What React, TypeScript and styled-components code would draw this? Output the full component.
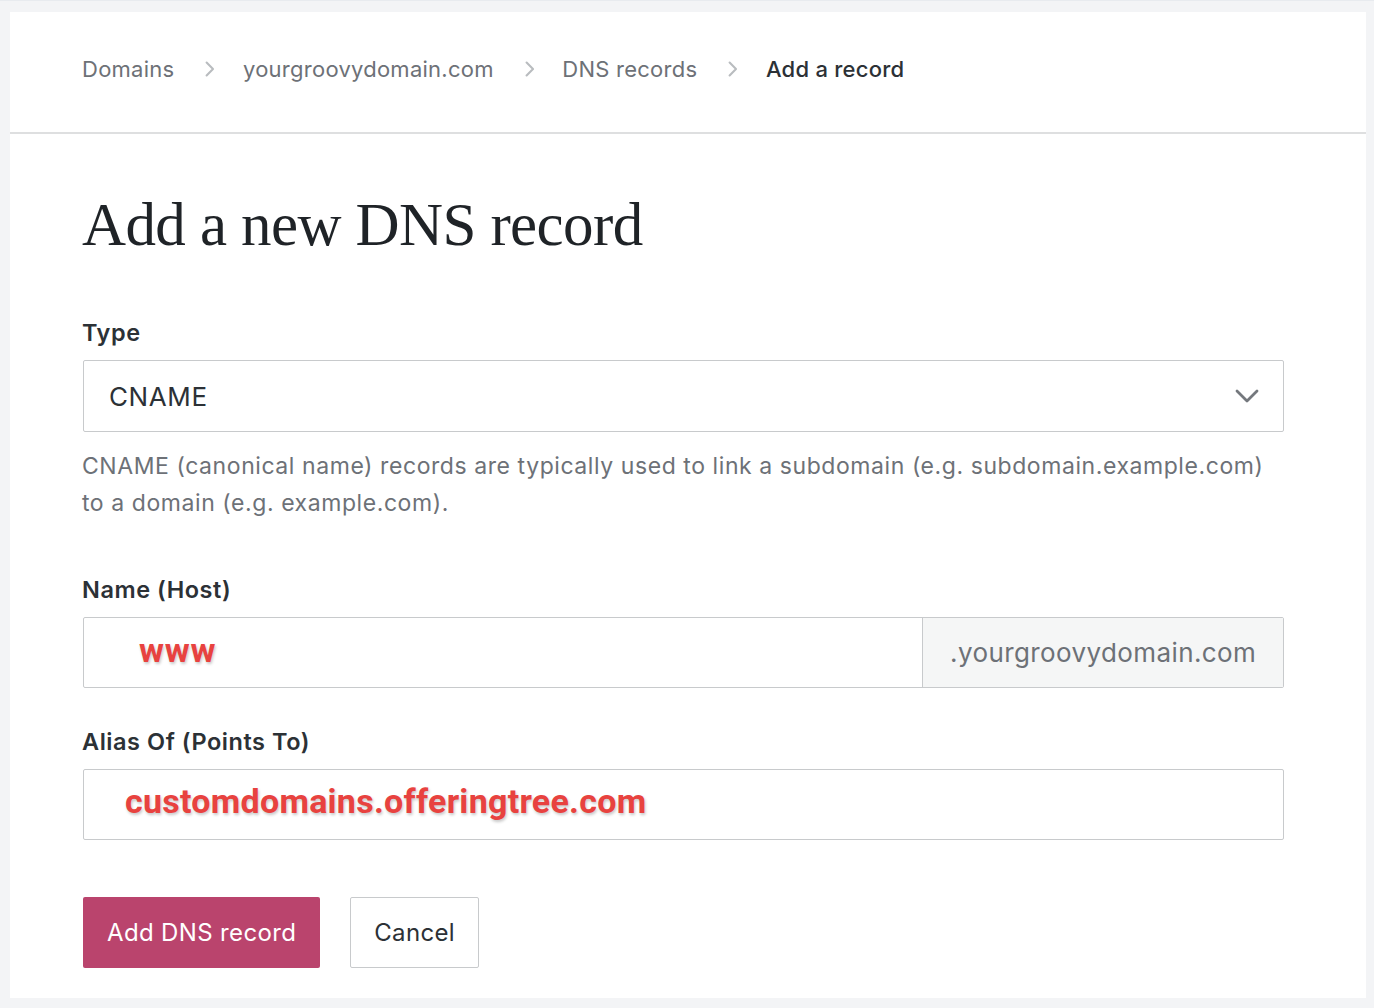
import React from "react";
import styled, { createGlobalStyle } from "styled-components";

const Global = createGlobalStyle`
  html, body { margin: 0; padding: 0; }
  body {
    background: #f3f4f6;
    font-family: Inter, "Noto Sans", "Liberation Sans", sans-serif;
    -webkit-font-smoothing: antialiased;
  }
  * { box-sizing: border-box; }
`;

const Page = styled.div`
  width: 1374px;
  height: 1008px;
  padding: 11px 8px 11px 10px;
  background: #f3f4f6;
  border-top: 1px solid #e8ebef;
`;

const Card = styled.div`
  background: #fff;
  height: 986px;
  display: flex;
  flex-direction: column;
`;

const Crumbs = styled.nav`
  height: 122px;
  border-bottom: 2px solid #dedfe0;
  display: flex;
  align-items: center;
  padding: 0 0 6px 72px;
`;

const Crumb = styled.span<{ $current?: boolean }>`
  font-size: 22px;
  color: ${(p) => (p.$current ? "#2c3136" : "#6d7177")};
  font-weight: ${(p) => (p.$current ? 500 : 400)};
  letter-spacing: 0.25px;
`;

const Sep = styled.span`
  display: inline-flex;
  margin: 0 28px 0 31px;
  color: #b9bcbf;
`;

const Body = styled.div`
  padding: 55px 82px 0 72px;
  display: flex;
  flex-direction: column;
`;

const Title = styled.h1`
  margin: 0;
  font-family: "Liberation Serif", "DejaVu Serif", serif;
  font-weight: 400;
  font-size: 61px;
  letter-spacing: -0.6px;
  color: #1f2327;
  line-height: 72px;
`;

const Field = styled.div<{ $top: number }>`
  margin-top: ${(p) => p.$top}px;
  display: flex;
  flex-direction: column;
`;

const Label = styled.label`
  font-size: 23.5px;
  font-weight: 600;
  color: #2c3136;
  line-height: 30px;
  margin-bottom: 12px;
  letter-spacing: 0.55px;
`;

const SelectBox = styled.div`
  height: 72px;
  border: 1.5px solid #c8cacc;
  border-radius: 2px;
  display: flex;
  align-items: center;
  justify-content: space-between;
  padding: 0 24px 0 25px;
  font-size: 26px;
  letter-spacing: 0.6px;
  color: #2c3136;
  margin-left: 1px;
`;

const Help = styled.p`
  margin: 16px 0 0;
  font-size: 23px;
  line-height: 37px;
  color: #6d7177;
  letter-spacing: 0.57px;
  white-space: nowrap;
`;

const Group = styled.div`
  height: 71px;
  border: 1.5px solid #c8cacc;
  border-radius: 2px;
  display: flex;
  margin-left: 1px;
`;

const InputArea = styled.div<{ $pad: number }>`
  flex: 1;
  display: flex;
  align-items: center;
  padding-left: ${(p) => p.$pad}px;
`;

const Addon = styled.div`
  width: 361px;
  background: #f5f6f6;
  border-left: 1.5px solid #c8cacc;
  display: flex;
  align-items: center;
  padding-left: 27px;
  font-size: 26px;
  color: #6d7177;
  letter-spacing: 0.4px;
`;

const Annot = styled.span<{ $size: number; $shift: number; $track: number }>`
  font-family: Roboto, "Liberation Sans", sans-serif;
  font-weight: 700;
  font-size: ${(p) => p.$size}px;
  color: #e8423f;
  text-shadow: 1px 2px 3px rgba(0, 0, 0, 0.22);
  position: relative;
  top: ${(p) => p.$shift}px;
  letter-spacing: ${(p) => p.$track}px;
`;

const Actions = styled.div`
  display: flex;
  gap: 30px;
  margin-top: 57px;
  margin-left: 1px;
`;

const Button = styled.button<{ $primary?: boolean }>`
  height: 71px;
  padding: 0 ${(p) => (p.$primary ? 24 : 23)}px;
  border-radius: 2px;
  font-family: Inter, "Noto Sans", "Liberation Sans", sans-serif;
  font-size: 24px;
  letter-spacing: 0.35px;
  cursor: pointer;
  background: ${(p) => (p.$primary ? "#ba446d" : "#fff")};
  color: ${(p) => (p.$primary ? "#fff" : "#2c3136")};
  border: ${(p) => (p.$primary ? "none" : "1.5px solid #c8cacc")};
`;

const Chevron = ({ size = 14, color = "#b9bcbf", w = 1.6 }: { size?: number; color?: string; w?: number }) => (
  <svg width={size * 0.6} height={size} viewBox="0 0 6 10" fill="none">
    <path d="M1 1l4 4-4 4" stroke={color} strokeWidth={w} strokeLinecap="round" strokeLinejoin="round" />
  </svg>
);

const Down = () => (
  <svg width="24" height="14" viewBox="0 0 24 14" fill="none">
    <path d="M2 2l10 10L22 2" stroke="#74787d" strokeWidth="2.8" strokeLinecap="round" strokeLinejoin="round" />
  </svg>
);

export default function App() {
  return (
    <>
      <Global />
      <Page>
        <Card>
          <Crumbs>
            <Crumb>Domains</Crumb>
            <Sep><Chevron size={16} w={1.3} /></Sep>
            <Crumb>yourgroovydomain.com</Crumb>
            <Sep><Chevron size={16} w={1.3} /></Sep>
            <Crumb>DNS records</Crumb>
            <Sep><Chevron size={16} w={1.3} /></Sep>
            <Crumb $current>Add a record</Crumb>
          </Crumbs>
          <Body>
            <Title>Add a new DNS record</Title>
            <Field $top={57}>
              <Label>Type</Label>
              <SelectBox>
                <span>CNAME</span>
                <Down />
              </SelectBox>
              <Help>
                CNAME (canonical name) records are typically used to link a subdomain (e.g. subdomain.example.com)
                <br />
                to a domain (e.g. example.com).
              </Help>
            </Field>
            <Field $top={53}>
              <Label>Name (Host)</Label>
              <Group>
                <InputArea $pad={55}>
                  <Annot $size={34} $shift={-3} $track={0.8}>www</Annot>
                </InputArea>
                <Addon>.yourgroovydomain.com</Addon>
              </Group>
            </Field>
            <Field $top={39}>
              <Label>Alias Of (Points To)</Label>
              <Group>
                <InputArea $pad={41}>
                  <Annot $size={34} $shift={-4} $track={0.27}>customdomains.offeringtree.com</Annot>
                </InputArea>
              </Group>
            </Field>
            <Actions>
              <Button $primary>Add DNS record</Button>
              <Button>Cancel</Button>
            </Actions>
          </Body>
        </Card>
      </Page>
    </>
  );
}
